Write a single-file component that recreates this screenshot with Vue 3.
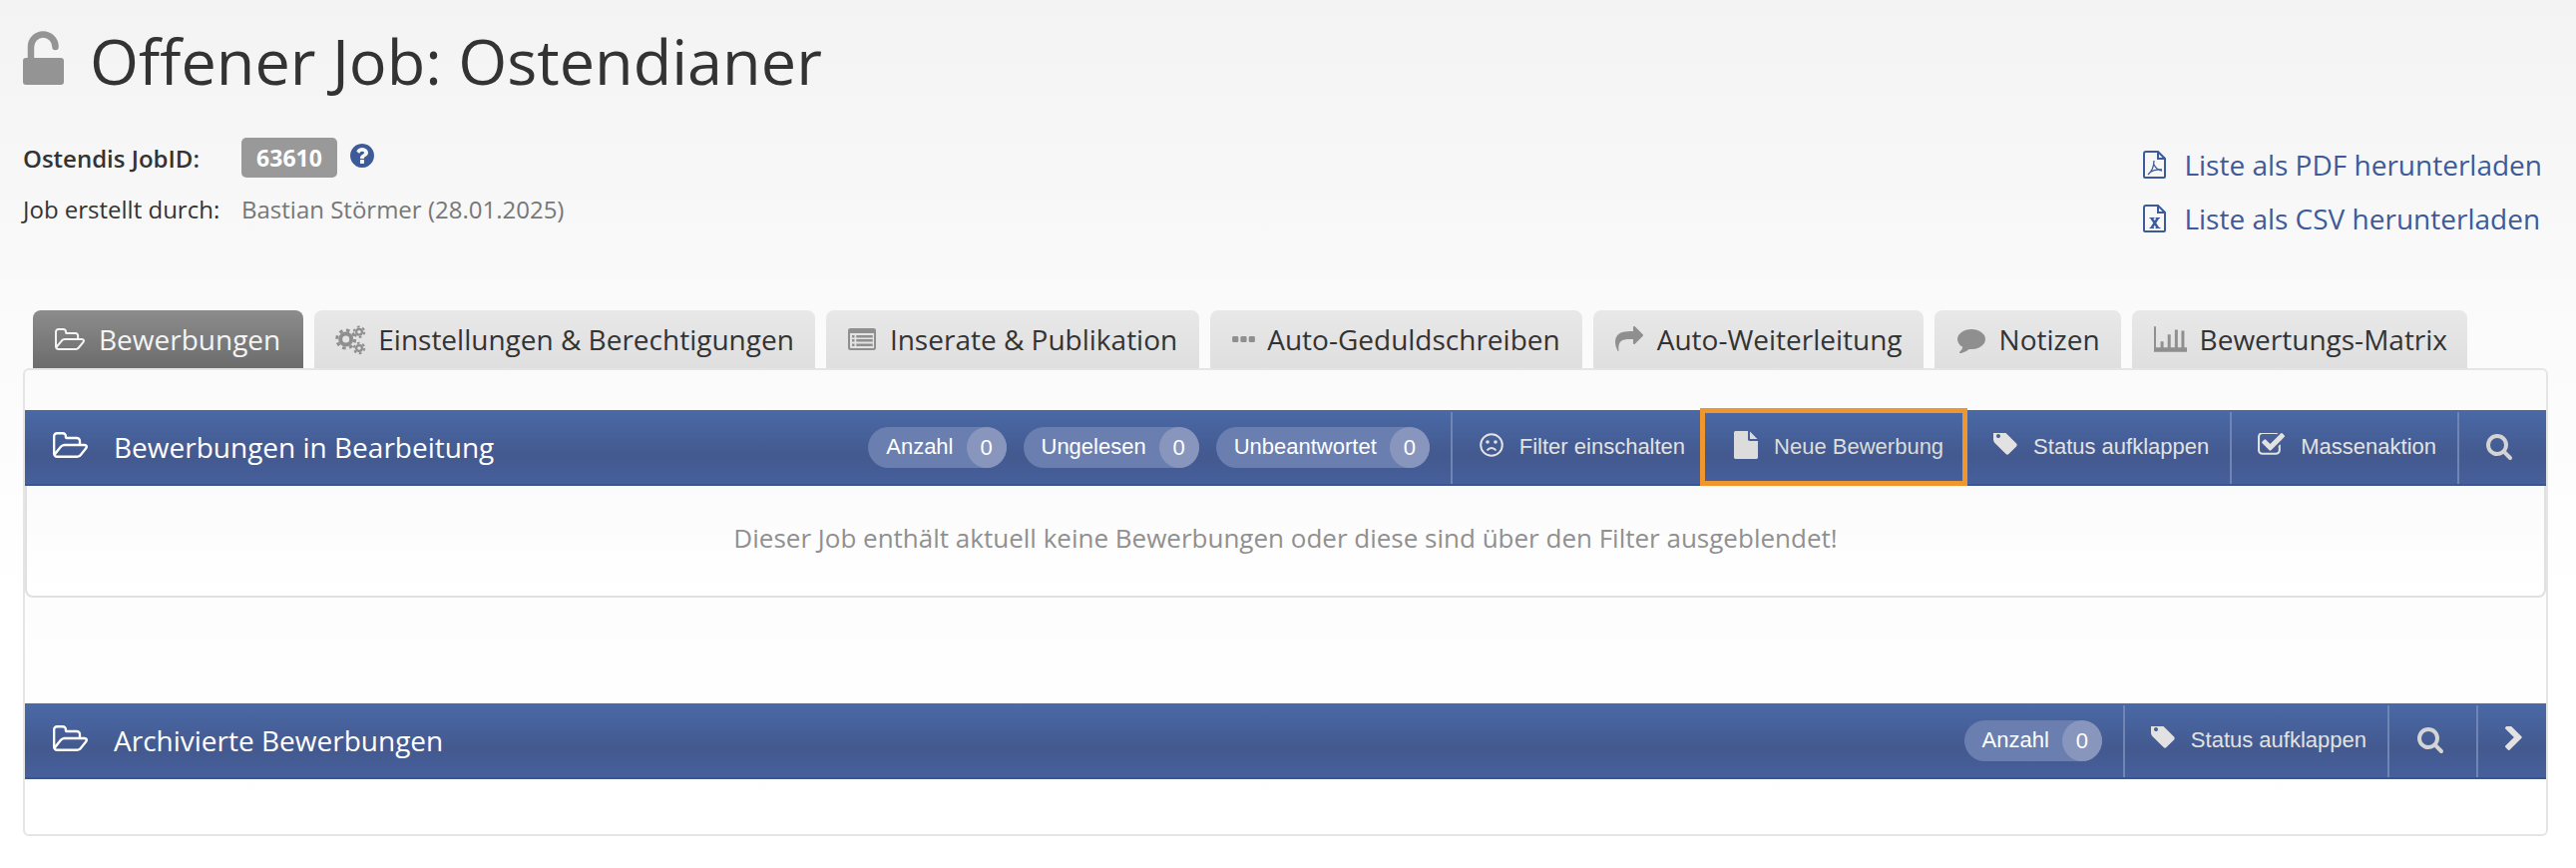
<script setup>
const icons = {
  folder: 'M1781 931q0-35-53-35h-1088q-40 0-85.500 21.500t-71.500 52.500l-294 363q-18 24-18 40 0 35 53 35h1088q40 0 86-22t71-53l294-363q18-22 18-39zm-1141-163h768v-160q0-40-28-68t-68-28h-576q-40 0-68-28t-28-68v-64q0-40-28-68t-68-28h-320q-40 0-68 28t-28 68v853l256-315q44-53 116-87.500t140-34.500zm1269 163q0 62-46 120l-295 363q-43 53-116 87.500t-140 34.500h-1088q-92 0-158-66t-66-158v-960q0-92 66-158t158-66h320q92 0 158 66t66 158v32h544q92 0 158 66t66 158v160h192q54 0 99 24.500t67 70.500q15 32 15 68z',
  search: 'M1216 832q0-185-131.500-316.500t-316.500-131.500-316.500 131.500-131.500 316.500 131.500 316.500 316.500 131.500 316.500-131.500 131.500-316.500zm512 832q0 52-38 90t-90 38q-54 0-90-38l-343-342q-179 124-399 124-143 0-273.500-55.500t-225-150-150-225-55.500-273.500 55.500-273.500 150-225 225-150 273.500-55.500 273.500 55.500 225 150 150 225 55.500 273.500q0 220-124 399l343 343q37 37 37 90z',
  chevron: 'M1363 877l-742 742q-19 19-45 19t-45-19l-166-166q-19-19-19-45t19-45l531-531-531-531q-19-19-19-45t19-45l166-166q19-19 45-19t45 19l742 742q19 19 19 45t-19 45z',
  comment: 'M1792 896q0 174-120 321.500t-326 233-450 85.500q-70 0-145-8-198 175-460 242-49 14-114 22-17 2-30.500-9t-17.500-29v-1q-3-4-.5-12t2-10 4.500-9.500l6-9 7-8.500 8-9q7-8 31-34.500t34.500-38 31-39.500 32.500-51 27-59 26-76q-157-89-247.500-220t-90.500-281q0-130 71-248.500t191-204.500 286-136.500 348-50.500 348 50.500 286 136.500 191 204.500 71 248.500z',
  tag: 'M576 448q0-53-37.500-90.500t-90.500-37.500-90.500 37.500-37.500 90.500 37.500 90.500 90.500 37.500 90.500-37.500 37.500-90.500zm1067 576q0 53-37 90l-491 492q-39 37-91 37-53 0-90-37l-715-716q-38-37-64.500-101t-26.500-117v-416q0-52 38-90t90-38h416q53 0 117 26.500t102 64.500l715 714q37 39 37 91z',
  share: 'M1792 640q0 26-19 45l-512 512q-19 19-45 19t-45-19-19-45v-256h-224q-98 0-175.500 6t-154 21.500-133 42.500-105.500 69.500-80 101-48.500 138.500-17.500 181q0 55 5 123 0 6 2.500 23.500t2.500 26.500q0 15-8.500 25t-23.500 10q-16 0-28-17-7-9-13-22t-13.500-30-10.500-24q-127-285-127-451 0-199 53-333 162-403 875-403h224v-256q0-26 19-45t45-19 45 19l512 512q19 19 19 45z',
  file: 'M1152 512v-472q22 14 36 28l408 408q14 14 28 36h-472zm-128 32q0 40 28 68t68 28h544v1056q0 40-28 68t-68 28h-1344q-40 0-68-28t-28-68v-1600q0-40 28-68t68-28h800v544z',
  check: 'M1472 930v318q0 119-84.500 203.500t-203.500 84.500h-832q-119 0-203.500-84.500t-84.500-203.500v-832q0-119 84.500-203.500t203.500-84.500h832q63 0 117 25 15 7 18 23 3 17-9 29l-49 49q-10 10-23 10-3 0-9-2-23-6-45-6h-832q-66 0-113 47t-47 113v832q0 66 47 113t113 47h832q66 0 113-47t47-113v-254q0-13 9-22l64-64q10-10 23-10 6 0 12 3 20 8 20 29zm231-489l-814 814q-24 24-57 24t-57-24l-430-430q-24-24-24-57t24-57l110-110q24-24 57-24t57 24l263 263 647-647q24-24 57-24t57 24l110 110q24 24 24 57t-24 57z',
  question: 'M1024 1376v-192q0-14-9-23t-23-9h-192q-14 0-23 9t-9 23v192q0 14 9 23t23 9h192q14 0 23-9t9-23zm256-672q0-88-55.500-163t-138.500-116-170-41q-243 0-371 213-15 24 8 42l132 100q7 6 19 6 16 0 25-12 53-68 86-92 34-24 86-24 48 0 85.500 26t37.500 59q0 38-20 61t-68 45q-63 28-115.500 86.500t-52.500 125.500v36q0 14 9 23t23 9h192q14 0 23-9t9-23q0-19 21.500-49.500t54.500-49.500q32-18 49-28.500t46-35 44.500-48 28-60.500 12.500-81zm384 192q0 209-103 385.500t-279.500 279.500-385.500 103-385.500-103-279.500-279.500-103-385.500 103-385.500 279.500-279.500 385.500-103 385.500 103 279.500 279.500 103 385.500z',
  list: 'M240 280H1552q128 0 128 128V1384q0 128-128 128H240q-128 0-128-128V408q0-128 128-128zM224 560V1360q0 40 40 40H1528q40 0 40-40V560zM336 675h140v140H336zM336 899h140v140H336zM336 1145h140v140H336zM577 675h918v140H577zM577 899h918v140H577zM577 1145h918v140H577z',
  dots: 'M576 736v192q0 40-28 68t-68 28h-192q-40 0-68-28t-28-68v-192q0-40 28-68t68-28h192q40 0 68 28t28 68zm512 0v192q0 40-28 68t-68 28h-192q-40 0-68-28t-28-68v-192q0-40 28-68t68-28h192q40 0 68 28t28 68zm512 0v192q0 40-28 68t-68 28h-192q-40 0-68-28t-28-68v-192q0-40 28-68t68-28h192q40 0 68 28t28 68z',
  chart: 'M128 256h100v1056h1564v224H128zM461 1012h150v300H461zM820 662h150v650H820zM1180 412h150v900h-150zM1512 462h150v850h-150z'
}

const tabs = [
  { label: 'Bewerbungen', icon: 'folder', vb: '0 128 1909 1408', active: true, padL: 22, padR: 23, iw: 30, gap: 14 },
  { label: 'Einstellungen & Berechtigungen', icon: 'cogs', padL: 21, padR: 21, iw: 31, gap: 12 },
  { label: 'Inserate & Publikation', icon: 'list', vb: '0 0 1792 1792', padL: 20, padR: 22, iw: 32, gap: 12 },
  { label: 'Auto-Geduldschreiben', icon: 'dots', vb: '0 -64 1792 1792', padL: 19, padR: 22, iw: 29, gap: 9 },
  { label: 'Auto-Weiterleitung', icon: 'share', vb: '0 0 1792 1792', padL: 22, padR: 21, iw: 28, gap: 14 },
  { label: 'Notizen', icon: 'comment', vb: '0 0 1792 1792', padL: 23, padR: 21, iw: 28, gap: 14 },
  { label: 'Bewertungs-Matrix', icon: 'chart', vb: '128 256 1664 1280', padL: 22, padR: 20, iw: 33, gap: 13 }
]

const chips1 = [
  { label: 'Anzahl', n: 0 },
  { label: 'Ungelesen', n: 0 },
  { label: 'Unbeantwortet', n: 0 }
]
</script>

<template>
  <div class="page">
    <header class="head">
      <h1 class="title">
        <svg class="lock" viewBox="0 0 41 54" aria-hidden="true">
          <path d="M8 28V15.750a12.250 12.250 0 0 1 24.500 0V16" fill="none" stroke="#949494" stroke-width="6.500" stroke-linecap="round" />
          <rect x="0" y="27" width="41" height="27" rx="3" fill="#949494" />
        </svg>
        <span>Offener Job: Ostendianer</span>
      </h1>
      <div class="meta">
        <div class="info">
          <div class="row">
            <span class="lbl strong">Ostendis JobID:</span>
            <span class="badge">63610</span>
            <svg class="qmark" viewBox="0 0 1536 1536" aria-hidden="true"><path transform="translate(-128 -128)" :d="icons.question" /></svg>
          </div>
          <div class="row second">
            <span class="lbl">Job erstellt durch:</span>
            <span class="val">Bastian Störmer (28.01.2025)</span>
          </div>
        </div>
        <div class="links">
          <a class="dl">
            <svg class="docicon" viewBox="0 0 23 28" aria-hidden="true">
              <path d="M1 3a2 2 0 0 1 2-2h12l7 7v18a1 1 0 0 1-1 1H2a1 1 0 0 1-1-1z M15 1v7h7" fill="none" stroke="currentColor" stroke-width="2" />
              <path d="M5 24C9 20.500 11 15 11 10M11 14C12.500 17 15 19.500 19 20M7 21.500C10 19.500 14 18.500 19 19" fill="none" stroke="currentColor" stroke-width="1.300" />
            </svg>
            <span>Liste als PDF herunterladen</span>
          </a>
          <a class="dl">
            <svg class="docicon" viewBox="0 0 23 28" aria-hidden="true">
              <path d="M1 3a2 2 0 0 1 2-2h12l7 7v18a1 1 0 0 1-1 1H2a1 1 0 0 1-1-1z M15 1v7h7" fill="none" stroke="currentColor" stroke-width="2" />
              <path d="M8.500 13.500l6.500 10M15 13.500l-6.500 10" fill="none" stroke="currentColor" stroke-width="2.400" />
              <path d="M6.500 13.500h5M12.500 13.500h4.500M6.500 23.500h4.500M12.500 23.500h5" fill="none" stroke="currentColor" stroke-width="1" />
            </svg>
            <span>Liste als CSV herunterladen</span>
          </a>
        </div>
      </div>
    </header>

    <nav class="tabs">
      <div
        v-for="t in tabs"
        :key="t.label"
        class="tab"
        :class="{ active: t.active }"
        :style="{ paddingLeft: t.padL + 'px', paddingRight: t.padR + 'px', gap: t.gap + 'px' }"
      >
        <svg v-if="t.icon === 'cogs'" class="tabicon" :style="{ width: t.iw + 'px' }" viewBox="0 0 31 32" aria-hidden="true">
          <g fill="none" stroke="currentColor">
            <circle cx="10.700" cy="16" r="5.500" stroke-width="4" />
            <circle cx="10.700" cy="16" r="9" stroke-width="3" stroke-dasharray="3.500 3.570" />
            <circle cx="24" cy="8.700" r="2.900" stroke-width="2.200" />
            <circle cx="24" cy="8.700" r="5.200" stroke-width="2" stroke-dasharray="2.700 2.750" />
            <circle cx="24" cy="25" r="2.900" stroke-width="2.200" />
            <circle cx="24" cy="25" r="5.200" stroke-width="2" stroke-dasharray="2.700 2.750" />
          </g>
        </svg>
        <svg v-else class="tabicon" :style="{ width: t.iw + 'px' }" :viewBox="t.vb" aria-hidden="true"><path :d="icons[t.icon]" /></svg>
        <span>{{ t.label }}</span>
      </div>
    </nav>

    <main class="panel">
      <section class="sect first">
        <div class="bar">
          <svg class="baricon" viewBox="0 128 1909 1408" aria-hidden="true"><path :d="icons.folder" /></svg>
          <h2 class="bartitle">Bewerbungen in Bearbeitung</h2>
          <div class="chips">
            <span v-for="c in chips1" :key="c.label" class="chip">
              <span class="chiplbl">{{ c.label }}</span><span class="count">{{ c.n }}</span>
            </span>
          </div>
          <div class="act act-filter">
            <svg class="acticon frown" viewBox="0 0 24 24" aria-hidden="true">
              <circle cx="12" cy="12" r="10.800" fill="none" stroke="currentColor" stroke-width="2" />
              <circle cx="8" cy="9" r="1.800" fill="currentColor" />
              <circle cx="16" cy="9" r="1.800" fill="currentColor" />
              <path d="M7.500 17.500c2.500-3.400 6.500-3.400 9 0" fill="none" stroke="currentColor" stroke-width="2" />
            </svg>
            <span>Filter einschalten</span>
          </div>
          <div class="newbtn">
            <svg class="acticon fileic" viewBox="128 0 1536 1792" aria-hidden="true"><path :d="icons.file" /></svg>
            <span>Neue Bewerbung</span>
          </div>
          <div class="act act-status">
            <svg class="acticon tagic" viewBox="128 256 1536 1536" aria-hidden="true"><path :d="icons.tag" /></svg>
            <span>Status aufklappen</span>
          </div>
          <div class="act act-mass divided">
            <svg class="acticon checkic" viewBox="64 256 1664 1344" aria-hidden="true"><path :d="icons.check" /></svg>
            <span>Massenaktion</span>
          </div>
          <div class="act act-search divided">
            <svg class="searchic" viewBox="64 128 1664 1664" aria-hidden="true"><path :d="icons.search" /></svg>
          </div>
        </div>
        <div class="empty">Dieser Job enthält aktuell keine Bewerbungen oder diese sind über den Filter ausgeblendet!</div>
      </section>

      <section class="sect">
        <div class="bar">
          <svg class="baricon" viewBox="0 128 1909 1408" aria-hidden="true"><path :d="icons.folder" /></svg>
          <h2 class="bartitle">Archivierte Bewerbungen</h2>
          <div class="chips">
            <span class="chip"><span class="chiplbl">Anzahl</span><span class="count">0</span></span>
          </div>
          <div class="act act-divided act-status2">
            <svg class="acticon tagic" viewBox="128 256 1536 1536" aria-hidden="true"><path :d="icons.tag" /></svg>
            <span>Status aufklappen</span>
          </div>
          <div class="act act-search2 divided">
            <svg class="searchic" viewBox="64 128 1664 1664" aria-hidden="true"><path :d="icons.search" /></svg>
          </div>
          <div class="act act-chev divided">
            <svg class="chevic" viewBox="365 154 1017 1484" aria-hidden="true"><path :d="icons.chevron" /></svg>
          </div>
        </div>
      </section>
    </main>
  </div>
</template>

<style>
html, body { margin: 0; background: #fff; }
</style>

<style scoped>
.page {
  width: 2582px;
  height: 870px;
  overflow: hidden;
  background: linear-gradient(#f3f3f3 0, #fafafa 300px, #fff 600px);
  font-family: "Open Sans", "Noto Sans", sans-serif;
  color: #333;
  box-sizing: border-box;
}
.head { padding: 0 34px 0 23px; height: 311px; box-sizing: border-box; }
.title {
  margin: 0;
  padding-top: 21px;
  display: flex;
  align-items: center;
  gap: 26px;
  font-size: 63px;
  font-weight: 400;
  line-height: 80px;
  color: #333;
}
.lock { width: 41px; height: 54px; flex: none; margin-top: -6px; }
.meta { display: flex; justify-content: space-between; margin-top: 37px; }
.row { display: flex; align-items: center; height: 40px; font-size: 24px; }
.row.second { margin-top: 11px; }
.lbl { width: 219px; flex: none; color: #333; }
.lbl.strong { font-weight: 600; }
.badge {
  width: 96px;
  height: 40px;
  line-height: 40px;
  text-align: center;
  border-radius: 5px;
  background: #999;
  color: #fff;
  font-weight: 700;
  font-size: 23px;
}
.qmark { width: 24px; height: 24px; margin-left: 13px; fill: #3d5a99; margin-top: -4px; }
.val { color: #777; }
.links { display: flex; flex-direction: column; gap: 26px; margin-top: 13px; }
.dl {
  display: flex;
  align-items: center;
  gap: 18px;
  height: 28px;
  font-size: 28px;
  color: #3d5a99;
  white-space: nowrap;
}
.docicon { width: 23px; height: 28px; flex: none; }

.tabs { display: flex; gap: 11px; padding-left: 33px; height: 58px; }
.tab {
  display: flex;
  align-items: center;
  font-size: 28px;
  color: #333;
  background: linear-gradient(#e8e8e8, #dfdfdf);
  border-radius: 8px 8px 0 0;
  white-space: nowrap;
}
.tab.active {
  background: linear-gradient(#8c8c8c, #6c6c6c);
  color: #f4f4f4;
}
.tabicon { height: 32px; flex: none; fill: #8f8f8f; color: #8f8f8f; }
.tab.active .tabicon { fill: #f4f4f4; }

.panel {
  margin: 0 28px 0 23px;
  height: 469px;
  box-sizing: border-box;
  border: 2px solid #e5e5e5;
  border-radius: 6px;
  padding-top: 40px;
  background: linear-gradient(#fbfbfb, #fff);
}
.sect.first { height: 294px; }
.bar {
  display: flex;
  align-items: stretch;
  height: 76px;
  box-sizing: border-box;
  background: linear-gradient(#4a69a6 0, #43598f 62%, #46609d 100%);
  border-bottom: 2px solid #3d5689;
  color: #fff;
  font-family: "Liberation Sans", Arial, sans-serif;
}
.baricon { width: 35px; height: 26px; align-self: center; margin: -4px 0 0 28px; fill: #fff; flex: none; }
.bartitle {
  margin: 0 0 0 26px;
  align-self: center;
  font-family: "Open Sans", sans-serif;
  font-size: 28px;
  font-weight: 400;
  white-space: nowrap;
}
.chips { margin-left: auto; display: flex; align-items: center; gap: 17px; padding-right: 21px; }
.chip {
  display: flex;
  align-items: center;
  height: 41px;
  border-radius: 21px;
  background: #6a7faf;
  font-size: 22px;
  color: #fff;
}
.chiplbl { padding: 0 13px 0 18px; }
.count {
  width: 40px;
  height: 41px;
  line-height: 41px;
  text-align: center;
  border-radius: 50%;
  background: #8896be;
}
.act {
  display: flex;
  align-items: center;
  color: #e2e2e2;
  font-size: 22px;
  white-space: nowrap;
  position: relative;
}
.act-filter::before, .act-divided::before, .divided::before {
  content: "";
  position: absolute;
  left: 0;
  top: 2px;
  bottom: 0;
  width: 2px;
  background: #6f86b5;
}
.act-filter { padding: 0 15px 0 29px; }
.acticon { width: 24px; height: 24px; fill: currentColor; flex: none; margin-right: 16px; margin-top: -4px; }
.act-status { padding: 0 21px 0 26px; }
.act-mass { padding: 0 21px 0 28px; }
.act-search { padding: 0 34px 0 29px; }
.act-status2 { padding: 0 21px 0 28px; }
.act-search2 { padding: 0 33px 0 30px; }
.act-chev { padding: 0 24px 0 29px; }
.searchic { width: 26px; height: 26px; fill: #d4d4d4; }
.chevic { width: 17px; height: 24px; fill: #e2e2e2; margin-top: -4px; }
.checkic { width: 27px; }
.fileic { height: 28px; }
.tagic { width: 24px; }
.newbtn {
  display: flex;
  align-items: center;
  box-sizing: border-box;
  margin-top: -2px;
  height: 78px;
  padding: 0 19px 0 29px;
  border: 5px solid #f0962f;
  color: #dcdcdc;
  font-size: 22px;
  white-space: nowrap;
}
.empty {
  height: 112px;
  box-sizing: border-box;
  padding-bottom: 6px;
  display: flex;
  align-items: center;
  justify-content: center;
  font-size: 26px;
  color: #909090;
  background: linear-gradient(#fbfbfb, #fff);
  border: 2px solid #e0e0e0;
  border-top: 0;
  border-radius: 0 0 8px 8px;
}
</style>
